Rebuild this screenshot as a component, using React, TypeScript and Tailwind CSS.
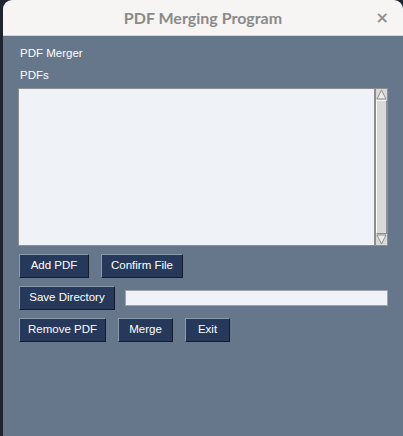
import React from "react";

const btn =
  "h-6 px-0 whitespace-nowrap bg-[#27395a] text-white text-[11.5px] leading-none border border-t-[#8c9aae] border-l-[#8c9aae] border-r-[#141c2b] border-b-[#141c2b] flex items-center justify-center";

function App() {
  return (
    <div className="w-[403px] h-[436px] bg-[#1e2430] flex overflow-hidden">
      <div className="ml-[3px] flex-1 flex flex-col rounded-t-[9px] overflow-hidden">
        <div className="h-[36px] bg-[#f6f5f4] border-b border-[#d8d4d0] flex items-center justify-center relative">
          <span className="text-[16px] font-bold text-[#8a8a8a] font-['Lato',sans-serif] mt-[1px]">
            PDF Merging Program
          </span>
          <span className="absolute right-[14px] top-[9px] text-[16px] leading-[18px] font-bold text-[#919191] font-['DejaVu_Sans',sans-serif]">
            ×
          </span>
        </div>
        <div className="flex-1 bg-[#66768b] font-['Liberation_Sans',sans-serif] pl-[15px] pr-[15px]">
          <div className="text-white text-[11.5px] mt-[9px] h-[16px] leading-[16px] pl-[2px]">PDF Merger</div>
          <div className="text-white text-[11.5px] mt-[6px] h-[16px] leading-[16px] pl-[2px]">PDFs</div>
          <div className="mt-[5px] flex h-[158px]">
            <div className="flex-1 bg-[#eff2f7] border border-[#8e8e8e]" />
            <div className="w-[13px] bg-[#d9d9d9] border border-[#8e8e8e] flex flex-col">
              <svg width="11" height="11" viewBox="0 0 11 11" className="block">
                <rect width="11" height="11" fill="#d9d9d9" />
                <polygon points="5.5,1 10,10 1,10" fill="#ececec" stroke="#8e8e8e" strokeWidth="1" />
              </svg>
              <div className="flex-1 border border-t-white border-l-white border-r-[#8e8e8e] border-b-[#8e8e8e] bg-[#d9d9d9]" />
              <svg width="11" height="11" viewBox="0 0 11 11" className="block">
                <rect width="11" height="11" fill="#d9d9d9" />
                <polygon points="1,1 10,1 5.5,10" fill="#ececec" stroke="#8e8e8e" strokeWidth="1" />
              </svg>
            </div>
          </div>
          <div className="mt-[8px] flex gap-[12px] pl-[1px]">
            <button className={`${btn} w-[70px]`}>Add PDF</button>
            <button className={`${btn} w-[82px]`}>Confirm File</button>
          </div>
          <div className="mt-[8px] flex items-center pl-[1px]">
            <button className={`${btn} w-[96px]`}>Save Directory</button>
            <div className="ml-[10px] flex-1 h-[16px] bg-[#eff2f7] border border-[#9aa3ae]" />
          </div>
          <div className="mt-[8px] flex gap-[12px] pl-[1px]">
            <button className={`${btn} w-[87px]`}>Remove PDF</button>
            <button className={`${btn} w-[55px]`}>Merge</button>
            <button className={`${btn} w-[45px]`}>Exit</button>
          </div>
        </div>
      </div>
    </div>
  );
}

export default App;
